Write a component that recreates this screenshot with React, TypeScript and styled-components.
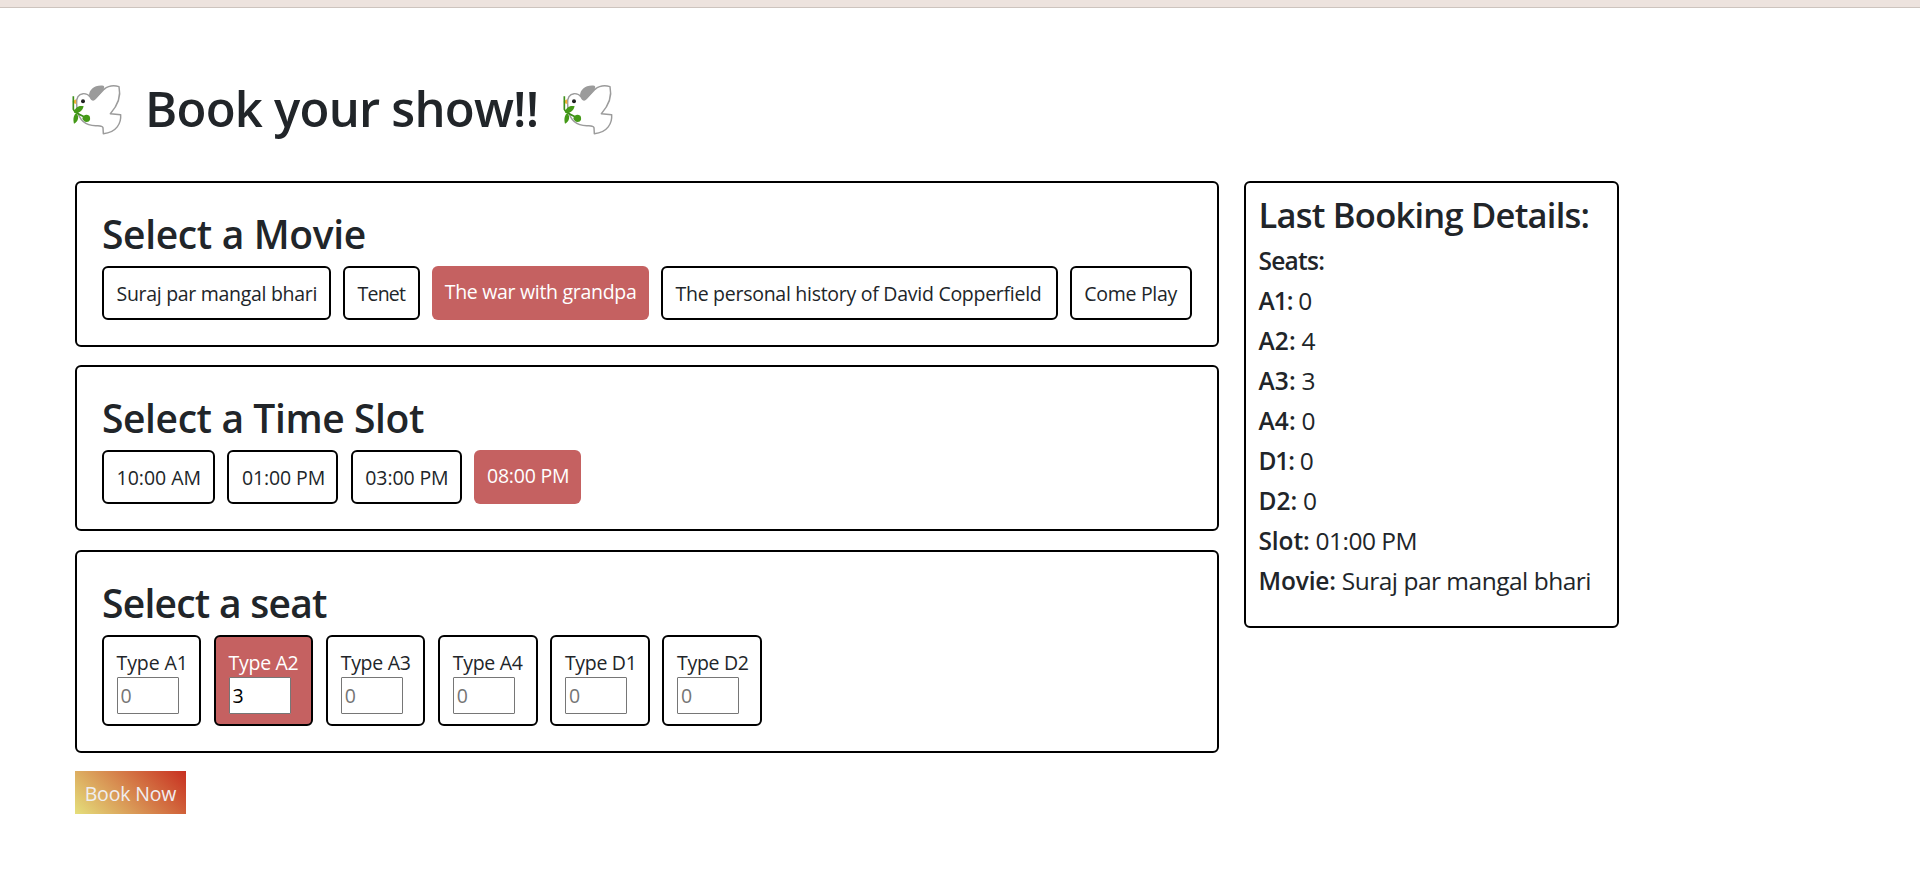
import React, { useState } from 'react';
import styled, { createGlobalStyle, css } from 'styled-components';

const GlobalStyle = createGlobalStyle`
  *, *::before, *::after { box-sizing: border-box; }
  body {
    margin: 0;
    background: #fff;
    color: #212529;
    font: 400 19.5px/30px "Open Sans", "Noto Sans", sans-serif;
  }
`;

const TopBar = styled.div`
  height: 8px;
  background: #ede3de;
  border-bottom: 1px solid #cdc4be;
`;

const Page = styled.main`
  padding: 75px 0 0 75px;
`;

const TitleRow = styled.header`
  display: flex;
  align-items: center;
  height: 60px;
  margin: -5px 0 43px -4px;
`;

const Title = styled.h1`
  margin: 0 24.5px 0 22px;
  width: 392px;
  white-space: nowrap;
  font-size: 49px;
  line-height: 60px;
  font-weight: 600;
  letter-spacing: -0.77px;
`;

const DoveIcon = styled.svg`
  flex: none;
  width: 52px;
  height: 52px;
  margin-top: 1.4px;
`;

const Columns = styled.div`
  display: flex;
  align-items: flex-start;
  gap: 25px;
`;

const Booking = styled.div`
  width: 1144px;
`;

const Card = styled.section`
  border: 2px solid #000;
  border-radius: 6px;
  padding: 26.8px 25px 25px;
  margin-bottom: 18.4px;
`;

const CardTitle = styled.h2<{ $spacing: number }>`
  margin: 0 0 8.2px;
  font-size: 39px;
  line-height: 48px;
  font-weight: 600;
  letter-spacing: ${(p) => p.$spacing}px;
`;

const Options = styled.div<{ $height: number; $gap: number }>`
  display: flex;
  height: ${(p) => p.$height}px;
  gap: ${(p) => p.$gap}px;
`;

const optionBase = css`
  flex: none;
  padding: 10.8px 12.5px 0;
  border: 2px solid #000;
  border-radius: 6px;
  white-space: nowrap;
`;

const Option = styled.div<{ $selected: boolean; $width: number; $spacing: number }>`
  ${optionBase}
  width: ${(p) => p.$width}px;
  letter-spacing: ${(p) => p.$spacing}px;
  cursor: pointer;
  ${(p) => p.$selected && css`
    border: 0;
    background: #c56161;
    color: #fff;
  `}
`;

const Seat = styled.label<{ $selected: boolean; $spacing: number }>`
  ${optionBase}
  width: 99.3px;
  padding-top: 11.5px;
  ${(p) => p.$selected && css`
    background: #c56161;
    color: #fff;
  `}
  span { display: block; letter-spacing: ${(p) => p.$spacing}px; }
`;

const SeatInput = styled.input`
  display: block;
  width: 62.5px;
  height: 37px;
  margin-top: -0.8px;
  padding: 0 3px;
  border: 1px solid #767676;
  border-radius: 1px;
  background: #fff;
  color: #000;
  font: inherit;
  &::placeholder { color: #757575; opacity: 1; }
`;

const BookButton = styled.button`
  display: block;
  width: 111px;
  height: 43px;
  padding: 3px 0 0;
  border: 0;
  background: linear-gradient(45deg, #e5df7b, #c82f20);
  color: #f0eef0;
  font: inherit;
  letter-spacing: -0.15px;
`;

const Summary = styled.aside`
  width: 375px;
  height: 446.5px;
  padding: 11px 12.5px;
  border: 2px solid #000;
  border-radius: 6px;
`;

const SummaryTitle = styled.h3`
  margin: 0 0 10.2px;
  white-space: nowrap;
  font-size: 34.5px;
  line-height: 42px;
  font-weight: 600;
  letter-spacing: -0.76px;
`;

const SummaryLine = styled.p`
  margin: 0 0 10px;
  white-space: nowrap;
  font-size: 24.5px;
  line-height: 30px;
  letter-spacing: -0.5px;
`;

const Label = styled.strong<{ $spacing: number }>`
  font-weight: 600;
  letter-spacing: ${(p) => p.$spacing}px;
`;

function Dove() {
  return (
    <DoveIcon viewBox="33 38 156 156" aria-hidden="true">
      <path
        d="M50 101 C48 83 56 71 69 70 C80 69 87 75 91 80 C98 90 106 85 113 77 L132 57 C142 49 160 44 177 49 C182 71 178 100 151 130 L182 133 C184 158 170 187 130 190 L129 172 C127 166 119 167 107 166 C76 166 57 147 51 118 Z"
        fill="#fff"
        stroke="#9b9b9b"
        strokeWidth="4.4"
        strokeLinejoin="round"
      />
      <path d="M87 75 C88 58 103 43 130 46 C136 50 131 56 126 63 L107 87 C101 94 94 92 90 83 Z" fill="#9b9b9b" />
      <circle cx="69" cy="93" r="6" fill="#212121" />
      <path d="M38 93 L48 87 L49 101 L39 98 Z" fill="#f9b233" />
      <path d="M40 78 L40 117 C43 127 57 132 78 142" fill="none" stroke="#3c8f18" strokeWidth="5" />
      <path d="M42 126 C46 112 54 105 71 108 C67 122 58 129 44 128 Z" fill="#449917" />
      <path d="M49 127 C58 139 56 152 42 160 C38 145 41 134 49 127 Z" fill="#449917" />
      <path d="M67 144 C69 134 79 131 88 136 C93 145 90 154 80 155 C73 155 69 150 67 144 Z" fill="#449917" />
    </DoveIcon>
  );
}

const movies = [
  { name: 'Suraj par mangal bhari', width: 229, spacing: -0.3 },
  { name: 'Tenet', width: 77, spacing: -0.8 },
  { name: 'The war with grandpa', width: 216.7, spacing: -0.3 },
  { name: 'The personal history of David Copperfield', width: 396.8, spacing: -0.27 },
  { name: 'Come Play', width: 122, spacing: -0.3 },
];

const slots = [
  { name: '10:00 AM', width: 113, spacing: 0 },
  { name: '01:00 PM', width: 111, spacing: -0.1 },
  { name: '03:00 PM', width: 111.3, spacing: -0.1 },
  { name: '08:00 PM', width: 107, spacing: -0.2 },
];

const seatTypes = [
  { name: 'A1', spacing: -0.1 },
  { name: 'A2', spacing: -0.3 },
  { name: 'A3', spacing: -0.3 },
  { name: 'A4', spacing: -0.3 },
  { name: 'D1', spacing: -0.3 },
  { name: 'D2', spacing: -0.3 },
];

const lastBooking = [
  { label: 'A1:', value: '0', spacing: -1 },
  { label: 'A2:', value: '4', spacing: 0.1 },
  { label: 'A3:', value: '3', spacing: 0.1 },
  { label: 'A4:', value: '0', spacing: 0.1 },
  { label: 'D1:', value: '0', spacing: -1.1 },
  { label: 'D2:', value: '0', spacing: 0 },
  { label: 'Slot:', value: '01:00 PM', spacing: -0.1 },
  { label: 'Movie:', value: 'Suraj par mangal bhari', spacing: -0.15 },
];

export default function App() {
  const [movie, setMovie] = useState('The war with grandpa');
  const [slot, setSlot] = useState('08:00 PM');
  const [seat, setSeat] = useState('A2');
  const [counts, setCounts] = useState<Record<string, string>>({ A2: '3' });

  return (
    <>
      <GlobalStyle />
      <TopBar />
      <Page>
        <TitleRow>
          <Dove />
          <Title>Book your show!!</Title>
          <Dove />
        </TitleRow>
        <Columns>
          <Booking>
            <Card>
              <CardTitle $spacing={-0.35}>Select a Movie</CardTitle>
              <Options $height={54} $gap={12.1}>
                {movies.map((m) => (
                  <Option
                    key={m.name}
                    $selected={m.name === movie}
                    $width={m.width}
                    $spacing={m.spacing}
                    onClick={() => setMovie(m.name)}
                  >
                    {m.name}
                  </Option>
                ))}
              </Options>
            </Card>
            <Card>
              <CardTitle $spacing={-0.4}>Select a Time Slot</CardTitle>
              <Options $height={54} $gap={12.4}>
                {slots.map((s) => (
                  <Option
                    key={s.name}
                    $selected={s.name === slot}
                    $width={s.width}
                    $spacing={s.spacing}
                    onClick={() => setSlot(s.name)}
                  >
                    {s.name}
                  </Option>
                ))}
              </Options>
            </Card>
            <Card>
              <CardTitle $spacing={-0.75}>Select a seat</CardTitle>
              <Options $height={91} $gap={12.8}>
                {seatTypes.map((t) => (
                  <Seat key={t.name} $selected={t.name === seat} $spacing={t.spacing}>
                    <span>Type {t.name}</span>
                    <SeatInput
                      placeholder="0"
                      value={counts[t.name] ?? ''}
                      onFocus={() => setSeat(t.name)}
                      onChange={(e) => setCounts({ ...counts, [t.name]: e.target.value })}
                    />
                  </Seat>
                ))}
              </Options>
            </Card>
            <BookButton type="button">Book Now</BookButton>
          </Booking>
          <Summary>
            <SummaryTitle>Last Booking Details:</SummaryTitle>
            <SummaryLine><Label $spacing={-0.75}>Seats:</Label></SummaryLine>
            {lastBooking.map(({ label, value, spacing }) => (
              <SummaryLine key={label}>
                <Label $spacing={spacing}>{label}</Label> {value}
              </SummaryLine>
            ))}
          </Summary>
        </Columns>
      </Page>
    </>
  );
}
